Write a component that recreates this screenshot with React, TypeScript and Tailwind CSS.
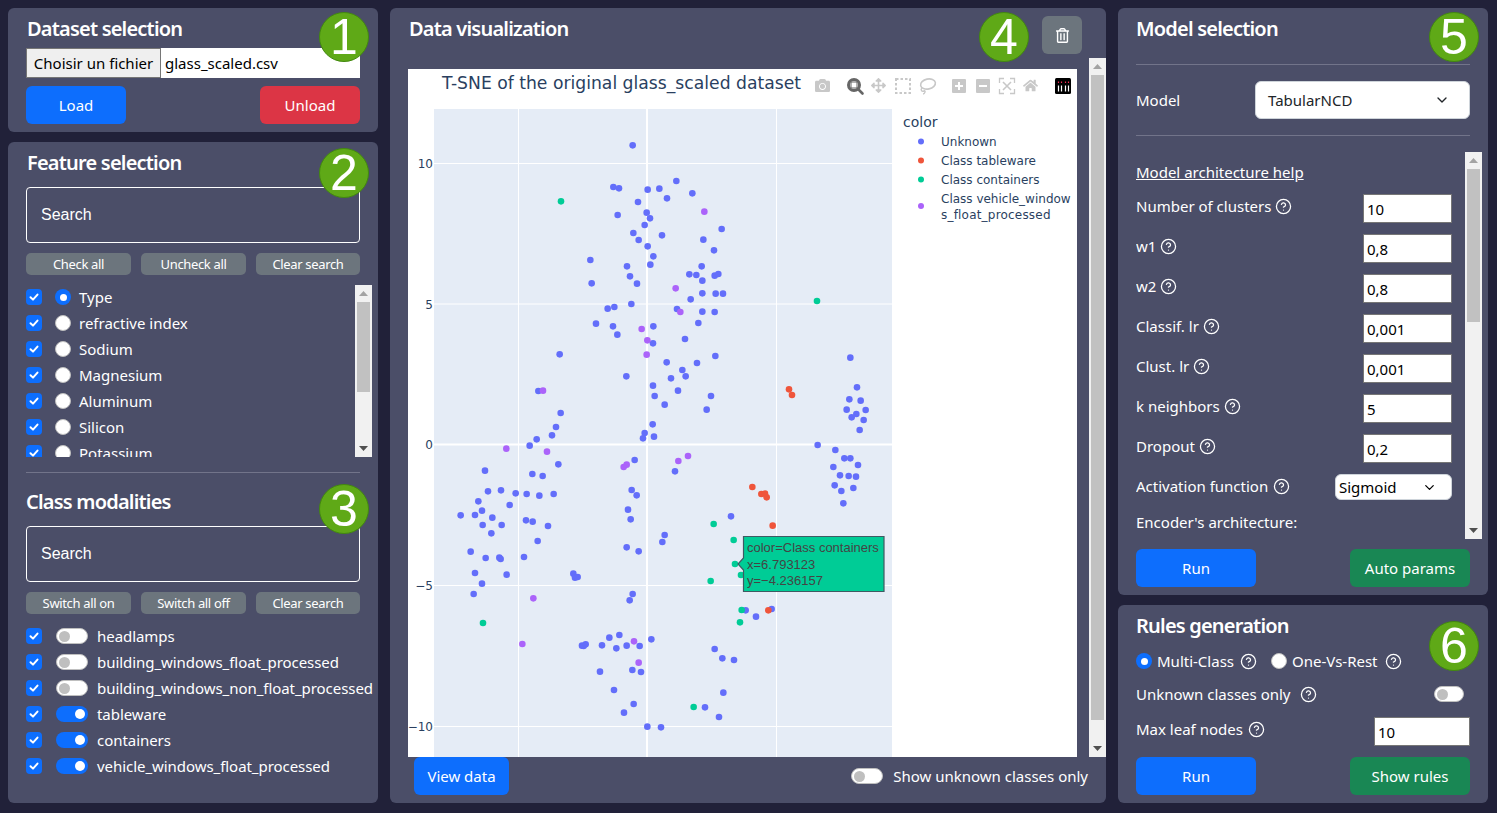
import { ChevronDown, CircleHelp } from "lucide-react";
import { FaCamera, FaHome, FaRegTrashAlt, FaArrowsAlt } from "react-icons/fa";
import type { ReactNode } from "react";

const features = ["Type", "refractive index", "Sodium", "Magnesium", "Aluminum", "Silicon", "Potassium"];
const classes = [
  { name: "headlamps", on: false },
  { name: "building_windows_float_processed", on: false },
  { name: "building_windows_non_float_processed", on: false },
  { name: "tableware", on: true },
  { name: "containers", on: true },
  { name: "vehicle_windows_float_processed", on: true },
];
const params = [
  { label: "Number of clusters", value: "10" },
  { label: "w1", value: "0,8" },
  { label: "w2", value: "0,8" },
  { label: "Classif. lr", value: "0,001" },
  { label: "Clust. lr", value: "0,001" },
  { label: "k neighbors", value: "5" },
  { label: "Dropout", value: "0,2" },
];

// scatter points, measured at 3x and grouped by the y offset of the crop
type Pt = [number, number];
const blueTop: Pt[] = [[698,436],[640,561],[657,565],[743,569],[778,566],[829,543],[877,580],[801,595],[714,606],[740,638],[750,655],[653,645],[734,675],[700,699],[716,720],[786,706],[743,739],[760,769],[571,780],[681,799],[751,794],[905,799],[965,687],[910,719],[942,751]];
const blueMid: Pt[] = [[575,40],[690,19],[711,41],[868,13],[889,15],[907,32],[944,17],[955,12],[872,88],[907,70],[947,71],[969,71],[694,102],[623,116],[643,111],[831,117],[907,125],[944,126],[588,161],[639,169],[652,194],[760,169],[895,159],[759,220],[855,207],[479,253],[946,258],[800,277],[891,279],[847,300],[813,325],[857,319],[679,319],[759,347],[834,362],[764,378],[933,378],[794,404],[920,419],[415,363],[482,429],[468,471],[456,496],[410,508],[389,527],[758,463],[734,489],[729,505],[762,500],[1351,263],[1371,352],[1348,388],[1382,392],[1397,420],[1340,419],[1369,432],[1355,442],[1391,450],[1379,480],[1253,525],[1306,540],[1333,565],[1351,565],[1374,585],[1300,591],[1320,616],[1346,618],[1368,620],[1304,646],[1324,663],[1360,654],[1330,700],[475,583],[704,570],[255,602],[397,612],[428,618],[825,604],[264,664],[303,661],[347,670],[380,672],[418,677],[461,672],[695,660],[710,676],[235,694],[329,705],[246,722],[684,719],[182,736],[225,735],[277,743],[692,748],[378,751],[398,755],[248,765],[305,765],[444,768],[993,739]];
const blueLow: Pt[] = [[274,10],[413,33],[794,15],[787,36],[680,52],[716,64],[212,65],[257,84],[298,83],[302,87],[372,81],[225,129],[320,134],[246,161],[221,192],[520,131],[525,143],[533,141],[698,192],[689,211],[1037,241],[1115,237],[1068,260],[628,323],[658,315],[754,328],[546,347],[551,348],[557,343],[606,346],[649,355],[680,347],[719,348],[944,357],[967,385],[1002,390],[600,425],[697,420],[723,426],[642,480],[970,488],[701,522],[672,548],[915,532],[957,561],[742,590],[783,592]];
const orangeMid: Pt[] = [[1167,358],[1176,375],[1057,651],[1084,672],[1095,671],[1100,682],[1118,767]];
const orangeLow: Pt[] = [[1105,241]];
const greenTop: Pt[] = [[483,604]];
const greenMid: Pt[] = [[1251,93],[941,762]];
const greenLow: Pt[] = [[1001,30],[1005,102],[1023,135],[932,153],[249,279],[1025,240],[1020,277],[881,531]];
const purpleTop: Pt[] = [[913,635]];
const purpleMid: Pt[] = [[827,55],[841,126],[725,177],[742,211],[740,254],[429,362],[319,536],[441,545],[671,591],[680,584],[835,573],[864,558]];
const purpleLow: Pt[] = [[400,205],[367,342],[702,334],[716,398]];

const traces = [
  { color: "#636efa", groups: [{ y0: 0, pts: blueTop }, { y0: 270, pts: blueMid }, { y0: 530, pts: blueLow }] },
  { color: "#ef553b", groups: [{ y0: 270, pts: orangeMid }, { y0: 530, pts: orangeLow }] },
  { color: "#00cc96", groups: [{ y0: 0, pts: greenTop }, { y0: 270, pts: greenMid }, { y0: 530, pts: greenLow }] },
  { color: "#ab63fa", groups: [{ y0: 0, pts: purpleTop }, { y0: 270, pts: purpleMid }, { y0: 530, pts: purpleLow }] },
];

function Panel({ className, children }: { className: string; children: ReactNode }) {
  return <section className={`relative rounded-[6px] bg-[#4b4e68] ${className}`}>{children}</section>;
}

function Title({ className = "", children }: { className?: string; children: ReactNode }) {
  return <h5 className={`flex h-[30px] items-center text-[20px] font-semibold tracking-[-0.8px] text-white ${className}`}>{children}</h5>;
}

function Badge({ n, className }: { n: number; className: string }) {
  return (
    <div className={`absolute flex h-[50px] w-[50px] items-center justify-center rounded-full border border-[#42880f] bg-[#5fa917] font-['Liberation_Sans',sans-serif] text-[50px] leading-none text-white ${className}`}>
      {n}
    </div>
  );
}

function Btn({ color, className, children }: { color: string; className: string; children: ReactNode }) {
  return (
    <button className={`flex h-[38px] items-center justify-center rounded-[6px] text-white ${color} ${className}`}>
      {children}
    </button>
  );
}

function SmallBtn({ className, children }: { className: string; children: ReactNode }) {
  return (
    <button className={`flex h-[22px] items-center justify-center rounded-[5px] bg-[#6c757d] pt-px text-[13px] tracking-[-0.35px] text-white ${className}`}>
      {children}
    </button>
  );
}

function Check() {
  return (
    <span className="flex h-4 w-4 shrink-0 items-center justify-center rounded-[4px] bg-[#0d6efd]">
      <svg width="10" height="10" viewBox="0 0 10 10" fill="none">
        <path d="M1.5 5.2 4 7.6 8.5 2.6" stroke="#fff" strokeWidth="2" strokeLinecap="round" strokeLinejoin="round" />
      </svg>
    </span>
  );
}

function Radio({ on }: { on?: boolean }) {
  return on ? (
    <span className="flex h-4 w-4 shrink-0 items-center justify-center rounded-full bg-[#0d6efd]">
      <span className="h-[7px] w-[7px] rounded-full bg-white" />
    </span>
  ) : (
    <span className="block h-4 w-4 shrink-0 rounded-full border border-[#bfbfbf] bg-white" />
  );
}

function Switch({ on, className = "w-8" }: { on?: boolean; className?: string }) {
  return on ? (
    <span className={`flex h-4 shrink-0 items-center justify-end rounded-full bg-[#0d6efd] px-[3px] ${className}`}>
      <span className="h-[10px] w-[10px] rounded-full bg-white" />
    </span>
  ) : (
    <span className={`flex h-4 shrink-0 items-center rounded-full border border-[#bfbfbf] bg-white px-[2px] ${className}`}>
      <span className="h-[11px] w-[11px] rounded-full bg-[#bfbfbf]" />
    </span>
  );
}

function Scrollbar({ className, thumbTop, thumbHeight }: { className: string; thumbTop: string; thumbHeight: string }) {
  return (
    <div className={`flex w-[17px] shrink-0 flex-col items-center justify-between bg-[#f1f1f1] ${className}`}>
      <div className="flex w-full flex-col items-center">
        <svg className="mt-[6px]" width="9" height="5" viewBox="0 0 9 5"><path d="M4.5 0 9 5H0z" fill="#a3a3a3" /></svg>
        <div className={`w-[13px] bg-[#c1c1c1] ${thumbTop} ${thumbHeight}`} />
      </div>
      <svg className="mb-[6px]" width="9" height="5" viewBox="0 0 9 5"><path d="M0 0h9L4.5 5z" fill="#505050" /></svg>
    </div>
  );
}

function Help({ className = "" }: { className?: string }) {
  return <CircleHelp size={17} strokeWidth={1.8} className={`shrink-0 text-white ${className}`} />;
}

function SearchBox() {
  return (
    <div className="flex h-[56px] items-center rounded-[4px] border border-white pl-[14px] font-['Liberation_Sans',sans-serif] text-[16px] text-white">
      Search
    </div>
  );
}

function NumberBox({ value, className }: { value: string; className: string }) {
  return (
    <input
      readOnly
      value={value}
      className={`h-[29px] border border-[#767676] bg-white pl-[3px] pt-px text-[15px] text-black outline-none ${className}`}
    />
  );
}

function Toolbar() {
  const grey = "#c8c8c8";
  return (
    <g>
      <FaCamera x={815} y={78} width={16} height={16} color={grey} />
      <circle cx={854} cy={85} r={5.5} fill="none" stroke="#666" strokeWidth={3} />
      <rect x={851} y={82} width={6} height={6} fill="none" stroke="#666" strokeWidth={1} />
      <path d="M858 89l4.5 4.5" stroke="#666" strokeWidth={2.6} strokeLinecap="round" />
      <FaArrowsAlt x={871} y={78} width={16} height={16} color={grey} />
      <rect x={896} y={79} width={14} height={14} fill="none" stroke={grey} strokeWidth={2} strokeDasharray="2.5 2" />
      <ellipse cx={928} cy={84} rx={7.5} ry={5} fill="none" stroke={grey} strokeWidth={1.6} transform="rotate(-12 928 84)" />
      <path d="M922 88c-2 2 0 4 2 3s1 3-1 3" fill="none" stroke={grey} strokeWidth={1.4} />
      <rect x={952} y={79} width={14} height={14} rx={1} fill={grey} />
      <path d="M959 82v8M955 86h8" stroke="#fff" strokeWidth={2} />
      <rect x={976} y={79} width={14} height={14} rx={1} fill={grey} />
      <path d="M979 86h8" stroke="#fff" strokeWidth={2} />
      <path d="M999.5 83v-4.500h4.500M1010 78.500h4.500v4.500M1014.500 89v4.500H1010M1004 93.500h-4.500V89" fill="none" stroke={grey} strokeWidth={1.3} />
      <path d="M1003 82l8 8M1011 82l-8 8" stroke={grey} strokeWidth={1.6} />
      <FaHome x={1023} y={78} width={16} height={16} color={grey} />
      <rect x={1055} y={78} width={16} height={16} rx={1.5} fill="#000" />
      <path d="M1058.500 85.500v6M1061.500 85.500v6M1065.500 85.500v6M1068.500 85.500v6" stroke="#fff" strokeWidth={1.2} />
      <path d="M1058.500 81.500v1.500M1061.500 81.500v1.500M1065.500 81.500v1.500M1068.500 81.500v1.500" stroke="#ef2d56" strokeWidth={1.2} />
    </g>
  );
}

function ScatterChart() {
  const gridX = [518.5, 776.5];
  const gridY = [163.5, 304, 585.5, 726.5];
  const ticks = [
    { y: 163.5, t: "10" },
    { y: 304, t: "5" },
    { y: 444.5, t: "0" },
    { y: 585.5, t: "\u22125" },
    { y: 726.5, t: "\u221210" },
  ];
  const legend = [
    { y: 141.500, c: "#636efa", t: "Unknown" },
    { y: 160.500, c: "#ef553b", t: "Class tableware" },
    { y: 179.500, c: "#00cc96", t: "Class containers" },
  ];
  return (
    <svg width="669" height="688" viewBox="408 69 669 688" className="block bg-white font-['DejaVu_Sans',sans-serif]">
      <text x={442} y={89} fontSize={17.200} fill="#2a3f5f">T-SNE of the original glass_scaled dataset</text>
      <Toolbar />
      <rect x={434} y={109} width={458} height={648} fill="#e5ecf6" />
      {gridX.map((x) => <line key={x} x1={x} x2={x} y1={109} y2={757} stroke="#fff" />)}
      {gridY.map((y) => <line key={y} x1={434} x2={892} y1={y} y2={y} stroke="#fff" />)}
      <line x1={647} x2={647} y1={109} y2={757} stroke="#fff" strokeWidth={2} />
      <line x1={434} x2={892} y1={444.500} y2={444.500} stroke="#fff" strokeWidth={2} />
      {ticks.map((k) => (
        <text key={k.t} x={433} y={k.y + 4.500} textAnchor="end" fontSize={12} fill="#2a3f5f">{k.t}</text>
      ))}
      {traces.map((tr) =>
        tr.groups.map((g) =>
          g.pts.map(([x, y], i) => (
            <circle key={`${tr.color}${g.y0}${i}`} cx={400 + x / 3} cy={g.y0 + y / 3} r={3.300} fill={tr.color} />
          ))
        )
      )}
      <text x={903} y={127} fontSize={14} fill="#2a3f5f">color</text>
      {legend.map((l) => (
        <g key={l.t}>
          <circle cx={921} cy={l.y} r={3} fill={l.c} />
          <text x={941} y={l.y + 4} fontSize={12} fill="#2a3f5f">{l.t}</text>
        </g>
      ))}
      <circle cx={921} cy={206} r={3} fill="#ab63fa" />
      <text x={941} y={202.500} fontSize={12} fill="#2a3f5f">Class vehicle_window</text>
      <text x={941} y={218.500} fontSize={12} letterSpacing={0.2} fill="#2a3f5f">s_float_processed</text>
      <path d="M743.500 536.500H884V591.500H743.500V570L738 564 743.500 558Z" fill="#00cc96" stroke="#3f5a63" strokeWidth={1.200} />
      <g className="font-['Liberation_Sans',sans-serif]" fontSize={13} fill="#444">
        <text x={747} y={552}>color=Class containers</text>
        <text x={747} y={569}>x=6.793123</text>
        <text x={747} y={585}>{"y=\u22124.236157"}</text>
      </g>
    </svg>
  );
}

export default function App() {
  return (
    <div className="h-[813px] w-[1497px] overflow-hidden bg-[#212139] pl-2 pt-2 font-['Noto_Sans',sans-serif] text-[15px] text-white">
      <div className="flex gap-3">
        <div className="flex w-[370px] flex-col gap-[10px]">
          <Panel className="h-[124px] px-[18px] pt-[6px]">
            <Title className="pl-px">Dataset selection</Title>
            <div className="mt-[4px] flex h-[30px] items-center bg-white text-black">
              <button className="h-[30px] w-[135px] border border-[#767676] bg-[#efefef] text-[15px]">Choisir un fichier</button>
              <span className="pl-[4px]">glass_scaled.csv</span>
            </div>
            <div className="mt-2 flex justify-between">
              <Btn color="bg-[#0d6efd]" className="w-[100px]">Load</Btn>
              <Btn color="bg-[#dc3545]" className="w-[100px]">Unload</Btn>
            </div>
            <Badge n={1} className="right-[9px] top-[4px]" />
          </Panel>

          <Panel className="h-[661px] px-[18px] pt-[6px]">
            <Title className="pl-px">Feature selection</Title>
            <div className="mt-[9px]"><SearchBox /></div>
            <div className="mt-[10px] flex justify-between">
              <SmallBtn className="w-[105px]">Check all</SmallBtn>
              <SmallBtn className="w-[105px]">Uncheck all</SmallBtn>
              <SmallBtn className="w-[104px]">Clear search</SmallBtn>
            </div>
            <div className="mr-[-12px] mt-[10px] flex h-[172px]">
              <div className="flex-1 overflow-hidden">
                <div className="mt-[-1px]">
                  {features.map((f, i) => (
                    <div key={f} className="flex h-[26px] items-center">
                      <Check />
                      <span className="ml-[13px] mr-2"><Radio on={i === 0} /></span>
                      {f}
                    </div>
                  ))}
                </div>
              </div>
              <Scrollbar className="h-[172px]" thumbTop="mt-[6px]" thumbHeight="h-[90px]" />
            </div>
            <div className="mt-[15px] h-px bg-[#72748a]" />
            <div className="mt-[14px]"><Title>Class modalities</Title></div>
            <div className="mt-[9px]"><SearchBox /></div>
            <div className="mt-[10px] flex justify-between">
              <SmallBtn className="w-[105px]">Switch all on</SmallBtn>
              <SmallBtn className="w-[105px]">Switch all off</SmallBtn>
              <SmallBtn className="w-[104px]">Clear search</SmallBtn>
            </div>
            <div className="mt-[9px] whitespace-nowrap tracking-[-0.05px]">
              {classes.map((c) => (
                <div key={c.name} className="flex h-[26px] items-center">
                  <Check />
                  <span className="ml-[14px] mr-[9px]"><Switch on={c.on} /></span>
                  {c.name}
                </div>
              ))}
            </div>
            <Badge n={2} className="right-[9px] top-[6px]" />
            <Badge n={3} className="right-[9px] top-[342px]" />
          </Panel>
        </div>

        <Panel className="flex h-[795px] w-[716px] flex-col">
          <div className="flex h-[50px] items-start justify-between">
            <div className="ml-[19px] mt-[6px]"><Title>Data visualization</Title></div>
            <button className="mr-6 mt-2 flex h-[38px] w-10 items-center justify-center rounded-[6px] bg-[#6c757d]">
              <FaRegTrashAlt size={15} color="#fff" />
            </button>
          </div>
          <div className="flex h-[699px] justify-between">
            <div className="ml-[18px] mt-[11px]"><ScatterChart /></div>
            <Scrollbar className="h-[699px]" thumbTop="mt-[6px]" thumbHeight="h-[645px]" />
          </div>
          <div className="flex items-center justify-between pl-6 pr-[18px]">
            <Btn color="bg-[#0d6efd]" className="w-[95px]">View data</Btn>
            <div className="flex items-center gap-[10px]">
              <Switch />
              Show unknown classes only
            </div>
          </div>
          <Badge n={4} className="right-[77px] top-[4px]" />
        </Panel>

        <div className="flex w-[370px] flex-col gap-[10px]">
          <Panel className="h-[587px] px-[18px] pt-[6px]">
            <Title>Model selection</Title>
            <div className="mt-[20px] h-px bg-[#72748a]" />
            <div className="mt-4 flex items-center justify-between">
              Model
              <div className="flex h-[38px] w-[215px] items-center justify-between rounded-[6px] border border-[#ced4da] bg-white pl-3 pr-[19px] text-[#212529]">
                TabularNCD
                <ChevronDown size={16} strokeWidth={2} />
              </div>
            </div>
            <div className="mt-4 h-px bg-[#72748a]" />
            <div className="mr-[-12px] mt-4 flex h-[387px]">
              <div className="w-[316px] overflow-hidden">
                <div className="flex h-[34px] items-center pt-[6px] underline">Model architecture help</div>
                {params.map((p) => (
                  <div key={p.label} className="flex h-[40px] justify-between">
                    <div className="flex h-[40px] items-center gap-[4px]">
                      {p.label}
                      <Help />
                    </div>
                    <NumberBox value={p.value} className="mt-2 w-[89px]" />
                  </div>
                ))}
                <div className="flex h-[40px] justify-between">
                  <div className="flex h-[40px] items-center gap-[5px]">
                    Activation function
                    <Help />
                  </div>
                  <div className="mt-2 flex h-[26px] w-[117px] items-center justify-between rounded-[6px] border border-[#ced4da] bg-white pl-[3px] pr-[14px] text-black">
                    Sigmoid
                    <ChevronDown size={15} strokeWidth={2} />
                  </div>
                </div>
                <div className="flex h-[32px] items-center">Encoder's architecture:</div>
              </div>
              <div className="ml-[13px]">
                <Scrollbar className="h-[387px]" thumbTop="mt-[6px]" thumbHeight="h-[153px]" />
              </div>
            </div>
            <div className="mt-[10px] flex justify-between">
              <Btn color="bg-[#0d6efd]" className="w-[120px]">Run</Btn>
              <Btn color="bg-[#198754]" className="w-[120px]">Auto params</Btn>
            </div>
            <Badge n={5} className="right-[9px] top-[4px]" />
          </Panel>

          <Panel className="h-[198px] px-[18px] pt-[6px]">
            <Title>Rules generation</Title>
            <div className="mt-2 flex h-[24px] items-center">
              <Radio on />
              <span className="ml-[5px] mr-[6px]">Multi-Class</span>
              <Help />
              <span className="ml-[14px]"><Radio /></span>
              <span className="ml-[5px] mr-[7px]">One-Vs-Rest</span>
              <Help />
            </div>
            <div className="mt-[9px] flex h-[24px] items-center">
              Unknown classes only
              <Help className="ml-[9px]" />
              <span className="ml-auto mr-[6px]"><Switch className="w-[30px]" /></span>
            </div>
            <div className="mt-[11px] flex h-[29px] items-start justify-between">
              <div className="flex h-[25px] items-center gap-[5px]">
                Max leaf nodes
                <Help />
              </div>
              <NumberBox value="10" className="w-[96px]" />
            </div>
            <div className="mt-[11px] flex justify-between">
              <Btn color="bg-[#0d6efd]" className="w-[120px]">Run</Btn>
              <Btn color="bg-[#198754]" className="w-[120px]">Show rules</Btn>
            </div>
            <Badge n={6} className="right-[9px] top-[16px]" />
          </Panel>
        </div>
      </div>
    </div>
  );
}
